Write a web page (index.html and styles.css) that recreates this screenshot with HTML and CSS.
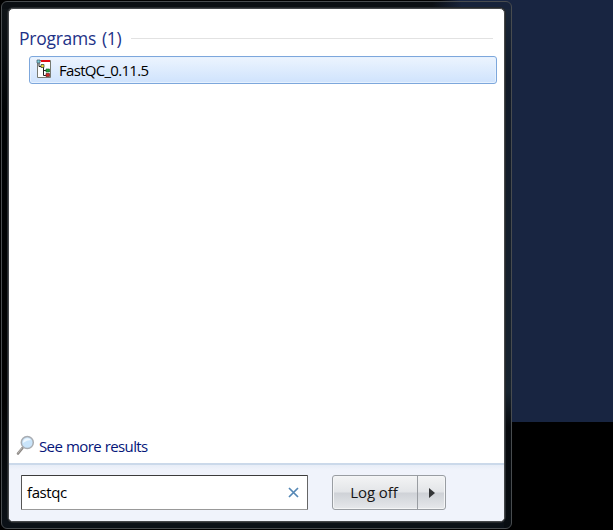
FILE: index.html
```html
<!DOCTYPE html>
<html lang="en">
<head>
<meta charset="utf-8">
<title>Start menu</title>
<link rel="stylesheet" href="styles.css">
</head>
<body>
<div class="frame">
  <main class="panel">
    <section class="results">
      <h1 class="heading"><span class="heading-text">Programs (1)</span></h1>
      <div class="item">
        <svg class="app-icon" width="16" height="20" viewBox="0 0 16 20">
          <path fill="#fff" stroke="#777a72" d="M1.500 1.500h13v17h-13z"/>
          <path fill="#e00b12" d="M5 1h9v2H5z"/>
          <path fill="none" stroke="#222" d="M3 4v3.500h3M7.500 8v8.500h3M7.500 11.500h3"/>
          <path fill="#7fd3dc" stroke="#456" stroke-width=".7" d="M1 1h3v3H1z"/>
          <path fill="#e9dc32" stroke="#333" stroke-width=".7" d="M5 5.500h3v3H5z"/>
          <path fill="#20a33b" stroke="#263" stroke-width=".7" d="M10 10h3.500v3H10z"/>
          <path fill="#d32722" stroke="#622" stroke-width=".7" d="M10 14.500h3.500v3H10z"/>
        </svg>
        <span class="item-text">FastQC_0.11.5</span>
      </div>
      <div class="more">
        <svg class="lens" width="19" height="21" viewBox="0 0 19 21">
          <path stroke="#8d8985" stroke-width="2.600" stroke-linecap="round" d="M6.500 13L2 18.500"/>
          <path stroke="#bab6b2" stroke-linecap="round" d="M6 13L2 18"/>
          <circle cx="11.300" cy="7.500" r="6" fill="#c9e4fa" stroke="#a9adb2" stroke-width="1.500"/>
          <path fill="#eff8ff" d="M7 8a4.500 4.500 0 0 1 8-3q-4 0-8 3z"/>
        </svg>
        <span class="more-text">See more results</span>
      </div>
    </section>
    <footer class="footer">
      <div class="search">
        <span class="query">fastqc</span>
        <svg width="11" height="11" viewBox="0 0 11 11"><path stroke="#5587b5" stroke-width="1.700" d="M1 1l9 9M10 1l-9 9"/></svg>
      </div>
      <div class="logoff">
        <div class="logoff-main"><span class="logoff-text">Log off</span></div>
        <div class="logoff-arrow"><svg width="6" height="10" viewBox="0 0 6 10"><path fill="#333537" d="M0 0l6 5-6 5z"/></svg></div>
      </div>
    </footer>
  </main>
</div>
</body>
</html>
```
FILE: styles.css
```css
* { box-sizing: border-box; }
body {
  margin: 0;
  width: 613px;
  height: 530px;
  padding: 1px;
  overflow: hidden;
  background: linear-gradient(#182541, #182541) 512px 0 / 101px 422px no-repeat,
    linear-gradient(90deg, #000 440px, #182541 460px) 0 0 / 512px 8px no-repeat, #000;
  font-family: "Open Sans", "Noto Sans", sans-serif;
}
.frame {
  width: 511px;
  height: 528px;
  padding: 6px;
  border: 1px solid #484c4f;
  border-radius: 6px;
  background: linear-gradient(90deg, #0b0f13, #0b0f13 430px, #17233a 460px) 0 0 / 100% 7px no-repeat,
    linear-gradient(#1b283b, #111a28 75px, #17232f 390px, #06090d 425px, #080d11) 100% 0 / 7px 100% no-repeat,
    linear-gradient(90deg, #0b1117, #0b1117) 0 100% / 100% 7px no-repeat,
    linear-gradient(#101519, #000305 110px, #030303 400px, #0b1117);
}
.panel {
  display: flex;
  flex-direction: column;
  width: 497px;
  height: 514px;
  border: 1px solid #44474a;
  border-radius: 5px;
  background: #fff;
  box-shadow: 0 0 0 1px #24282b;
  overflow: hidden;
}
.results {
  flex: 1;
  display: flex;
  flex-direction: column;
  padding: 17px 7px 6px 8px;
}
.heading {
  display: flex;
  align-items: center;
  gap: 9px;
  height: 24px;
  margin: 0 4px 0 2px;
  font-size: 17.5px;
  font-weight: 400;
  color: #1e3287;
}
.heading::after {
  content: "";
  flex: 1;
  height: 1px;
  background: #e2e2e2;
}
.heading-text {
  white-space: nowrap;
  letter-spacing: -.25px;
  word-spacing: 1.5px;
  padding-bottom: 1px;
}
.item {
  display: flex;
  align-items: center;
  gap: 7px;
  height: 28px;
  margin: 6px 0 0 12px;
  padding-left: 6px;
  border: 1px solid #7da7dc;
  border-radius: 3px;
  background: linear-gradient(#ecf4fe, #cfe3fd);
  box-shadow: inset 0 0 0 1px #e6f1fe;
  font-size: 15px;
  color: #000;
}
.app-icon { margin-top: -3px; }
.item-text { letter-spacing: -.7px; }
.more {
  display: flex;
  align-items: center;
  gap: 4px;
  height: 22px;
  margin: auto 0 0 -1px;
  font-size: 15px;
  color: #051579;
}
.lens { margin-top: -2px; }
.more-text {
  letter-spacing: -.62px;
  word-spacing: .5px;
}
.footer {
  display: flex;
  height: 58px;
  padding: 10px 12px 0 12px;
  border-top: 2px solid #cbd9ea;
  background: linear-gradient(#e7edf7, #f0f3fb 5px);
}
.search {
  display: flex;
  align-items: center;
  justify-content: space-between;
  width: 287px;
  height: 35px;
  padding: 0 8px 0 5px;
  border: 1px solid #999;
  border-top-color: #3c3c3c;
  border-left-color: #555;
  border-right-color: #666;
  border-radius: 1px;
  background: #fff;
  font-size: 15px;
  color: #000;
}
.query {
  padding-bottom: 2px;
  letter-spacing: -.4px;
}
.logoff {
  display: flex;
  width: 114px;
  height: 35px;
  margin-left: 24px;
  border: 1px solid #999da2;
  border-radius: 3px;
  background: linear-gradient(#f3f4f5, #e3e5e8 48%, #cfd2d7 52%, #e6e8eb);
  box-shadow: inset 0 0 0 1px #f4f5f6;
  font-size: 15px;
  color: #151515;
}
.logoff-main {
  display: flex;
  align-items: center;
  justify-content: center;
  width: 85px;
  padding: 0 2px 2px 0;
  border-right: 1px solid #999da2;
}
.logoff-text { letter-spacing: -.1px; }
.logoff-arrow {
  flex: 1;
  display: flex;
  align-items: center;
  justify-content: center;
}
```
